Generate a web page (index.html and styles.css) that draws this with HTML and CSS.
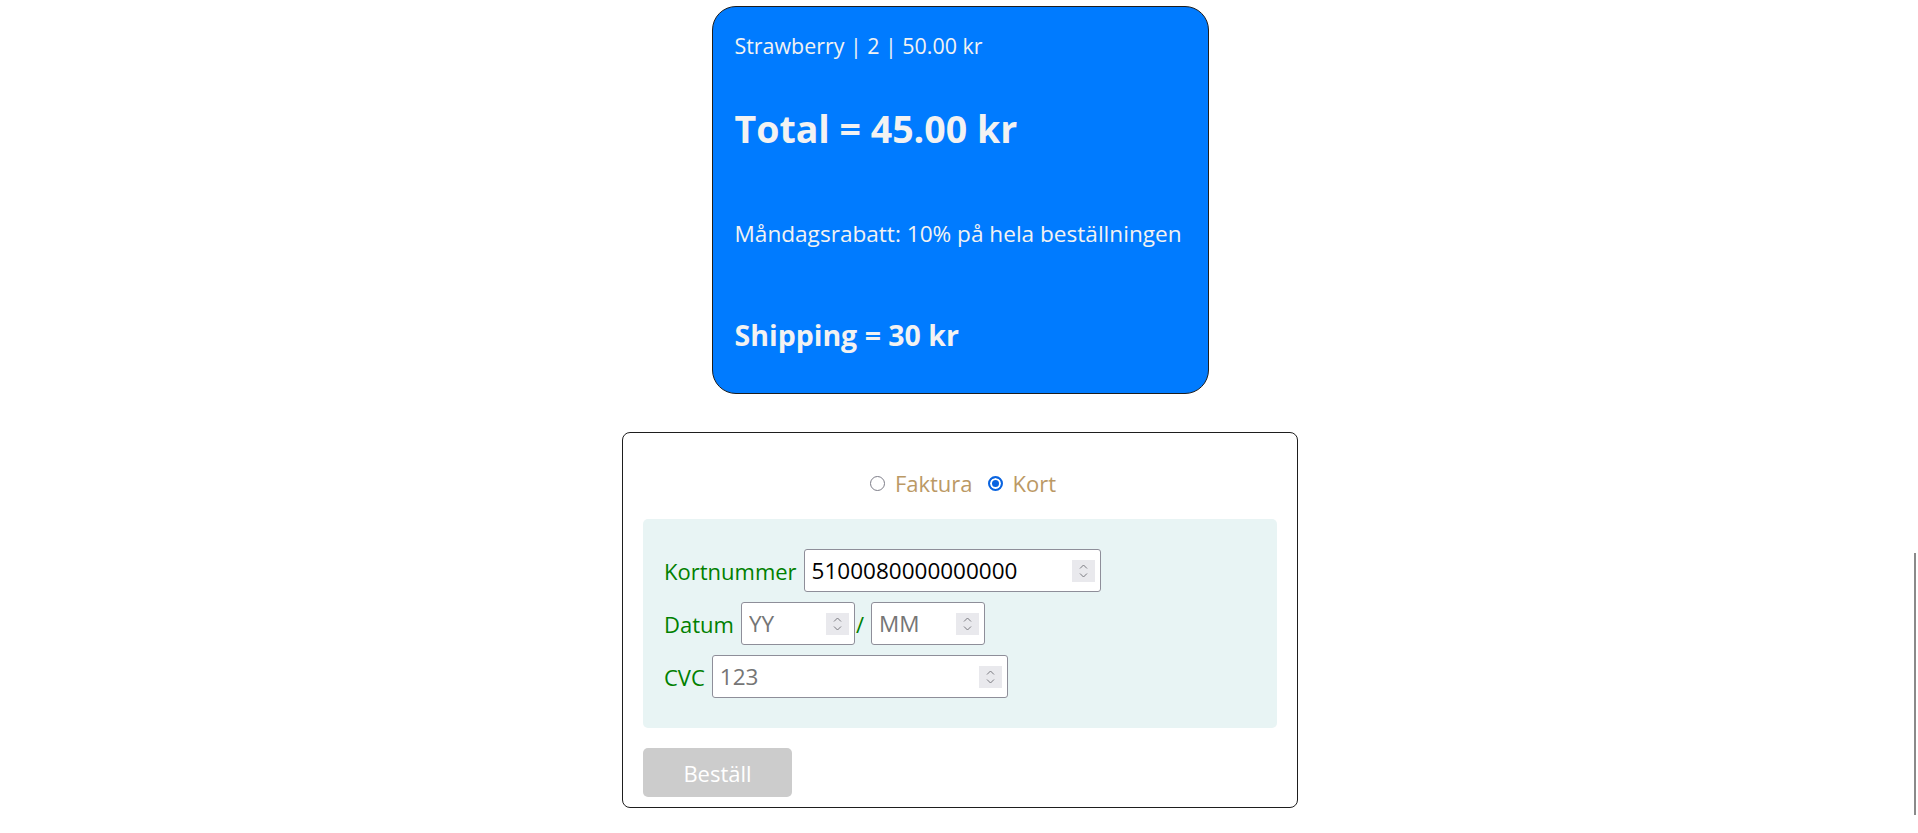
FILE: index.html
```html
<!DOCTYPE html>
<html lang="sv">
<head>
<meta charset="utf-8">
<title>Kassa</title>
<link rel="stylesheet" href="styles.css">
</head>
<body>
<main class="page">
  <section class="cart">
    <p class="cart-item">Strawberry | 2 | 50.00 kr</p>
    <h2 class="cart-total">Total = 45.00 kr</h2>
    <p class="cart-discount">Måndagsrabatt: 10% på hela beställningen</p>
    <h3 class="cart-shipping">Shipping = 30 kr</h3>
  </section>

  <form class="checkout">
    <div class="pay-options">
      <label class="pay-option"><input type="radio" name="pay" class="radio"> Faktura</label>
      <label class="pay-option"><input type="radio" name="pay" class="radio" checked> Kort</label>
    </div>

    <div class="card-panel">
      <div class="field-row">
        <label class="field-label" for="kortnr">Kortnummer</label>
        <span class="num-input w-long">
          <input id="kortnr" type="text" value="5100080000000000">
          <span class="spin"><svg width="23" height="22" viewBox="0 0 23 22"><rect width="23" height="22" fill="#e9e9ed"/><path d="M8 8.5 L11.5 5 L15 8.5" fill="none" stroke="#7a7a80" stroke-width="1"/><path d="M8 13.5 L11.5 17 L15 13.5" fill="none" stroke="#7a7a80" stroke-width="1"/></svg></span>
        </span>
      </div>
      <div class="field-row">
        <label class="field-label" for="yy">Datum</label>
        <span class="date-group">
          <span class="num-input w-short">
            <input id="yy" type="text" placeholder="YY">
            <span class="spin"><svg width="23" height="22" viewBox="0 0 23 22"><rect width="23" height="22" fill="#e9e9ed"/><path d="M8 8.5 L11.5 5 L15 8.5" fill="none" stroke="#7a7a80" stroke-width="1"/><path d="M8 13.5 L11.5 17 L15 13.5" fill="none" stroke="#7a7a80" stroke-width="1"/></svg></span>
          </span>
          <span class="slash">/</span>
          <span class="num-input w-short">
            <input type="text" placeholder="MM">
            <span class="spin"><svg width="23" height="22" viewBox="0 0 23 22"><rect width="23" height="22" fill="#e9e9ed"/><path d="M8 8.5 L11.5 5 L15 8.5" fill="none" stroke="#7a7a80" stroke-width="1"/><path d="M8 13.5 L11.5 17 L15 13.5" fill="none" stroke="#7a7a80" stroke-width="1"/></svg></span>
          </span>
        </span>
      </div>
      <div class="field-row">
        <label class="field-label" for="cvc">CVC</label>
        <span class="num-input w-cvc">
          <input id="cvc" type="text" placeholder="123">
          <span class="spin"><svg width="23" height="22" viewBox="0 0 23 22"><rect width="23" height="22" fill="#e9e9ed"/><path d="M8 8.5 L11.5 5 L15 8.5" fill="none" stroke="#7a7a80" stroke-width="1"/><path d="M8 13.5 L11.5 17 L15 13.5" fill="none" stroke="#7a7a80" stroke-width="1"/></svg></span>
        </span>
      </div>
    </div>

    <button type="button" class="order-btn" disabled>Beställ</button>
  </form>
</main>
<div class="scroll-thumb"></div>
</body>
</html>
```

FILE: styles.css
```css
* { box-sizing: border-box; }

html, body {
  margin: 0;
  background: #fff;
}

body {
  font-family: "Open Sans", "Noto Sans", sans-serif;
  font-size: 22px;
  color: #000;
}

.page {
  display: flex;
  flex-direction: column;
  align-items: center;
  padding-top: 6px;
  padding-left: 2px;
}

/* ---------- cart summary ---------- */
.cart {
  width: 497px;
  background: #007bff;
  color: #f2f2f2;
  border: 1px solid #1e1e1e;
  border-radius: 24px;
  padding: 24px 22px 42px;
}

.cart-item,
.cart-discount {
  margin: 0;
  font-size: 22px;
  line-height: 30px;
  font-weight: 400;
  white-space: nowrap;
}

.cart-item { font-size: 21.4px; }
.cart-discount { font-size: 22.6px; }

.cart-total {
  margin: 46px 0 0;
  font-size: 37.5px;
  line-height: 43px;
  font-weight: 700;
}

.cart-discount { margin-top: 69px; }

.cart-shipping {
  margin: 70px 0 0;
  font-size: 28.5px;
  line-height: 32px;
  font-weight: 700;
}

/* ---------- checkout form ---------- */
.checkout {
  margin-top: 38px;
  width: 676px;
  border: 1px solid #1e1e1e;
  border-radius: 8px;
  padding: 35px 20px 10px;
}

.pay-options {
  display: flex;
  justify-content: center;
  gap: 15px;
  height: 30px;
  line-height: 30px;
  color: #bb9965;
  padding-left: 6px;
}

.pay-option {
  display: inline-flex;
  align-items: center;
  gap: 10px;
}

.radio {
  appearance: none;
  -webkit-appearance: none;
  margin: 0;
  width: 15px;
  height: 15px;
  border-radius: 50%;
  border: 1.5px solid #7d7d88;
  background: #fff;
}

.radio:checked {
  border: 2px solid #0a64e0;
  background: #0a64e0;
  box-shadow: inset 0 0 0 2px #fff;
}

.card-panel {
  margin-top: 21px;
  background: #e8f4f4;
  border-radius: 5px;
  padding: 30px 21px;
  display: flex;
  flex-direction: column;
  gap: 10px;
}

.field-row {
  display: flex;
  align-items: center;
  gap: 7px;
  height: 43px;
}

.field-label {
  color: #008000;
  line-height: 30px;
}

.date-group {
  display: flex;
  align-items: center;
}

.slash {
  color: #008000;
  line-height: 30px;
  padding: 0 7px 0 1px;
}

.num-input {
  position: relative;
  display: block;
  height: 43px;
}

.num-input input {
  width: 100%;
  height: 100%;
  margin: 0;
  border: 1px solid #8e8e99;
  border-radius: 3px;
  background: #fff;
  padding: 0 34px 0 7px;
  font-family: "Open Sans", "Noto Sans", sans-serif;
  font-size: 22.5px;
  color: #000;
  outline: none;
}

.num-input input::placeholder { color: #757575; }

.w-long { width: 297px; }
.w-short { width: 114px; }
.w-cvc { width: 296px; }

.spin {
  position: absolute;
  right: 6px;
  top: 50%;
  transform: translateY(-50%);
  width: 23px;
  height: 22px;
  display: block;
}

.spin svg { display: block; }

.order-btn {
  display: block;
  margin-top: 20px;
  width: 149px;
  height: 49px;
  padding: 0;
  border: 0;
  border-radius: 5px;
  background: #ccc;
  color: #fff;
  font-family: "Open Sans", "Noto Sans", sans-serif;
  font-size: 22px;
}

.scroll-thumb {
  position: fixed;
  right: 2px;
  top: 553px;
  width: 2px;
  height: 262px;
  background: #8a8a8a;
}
```
